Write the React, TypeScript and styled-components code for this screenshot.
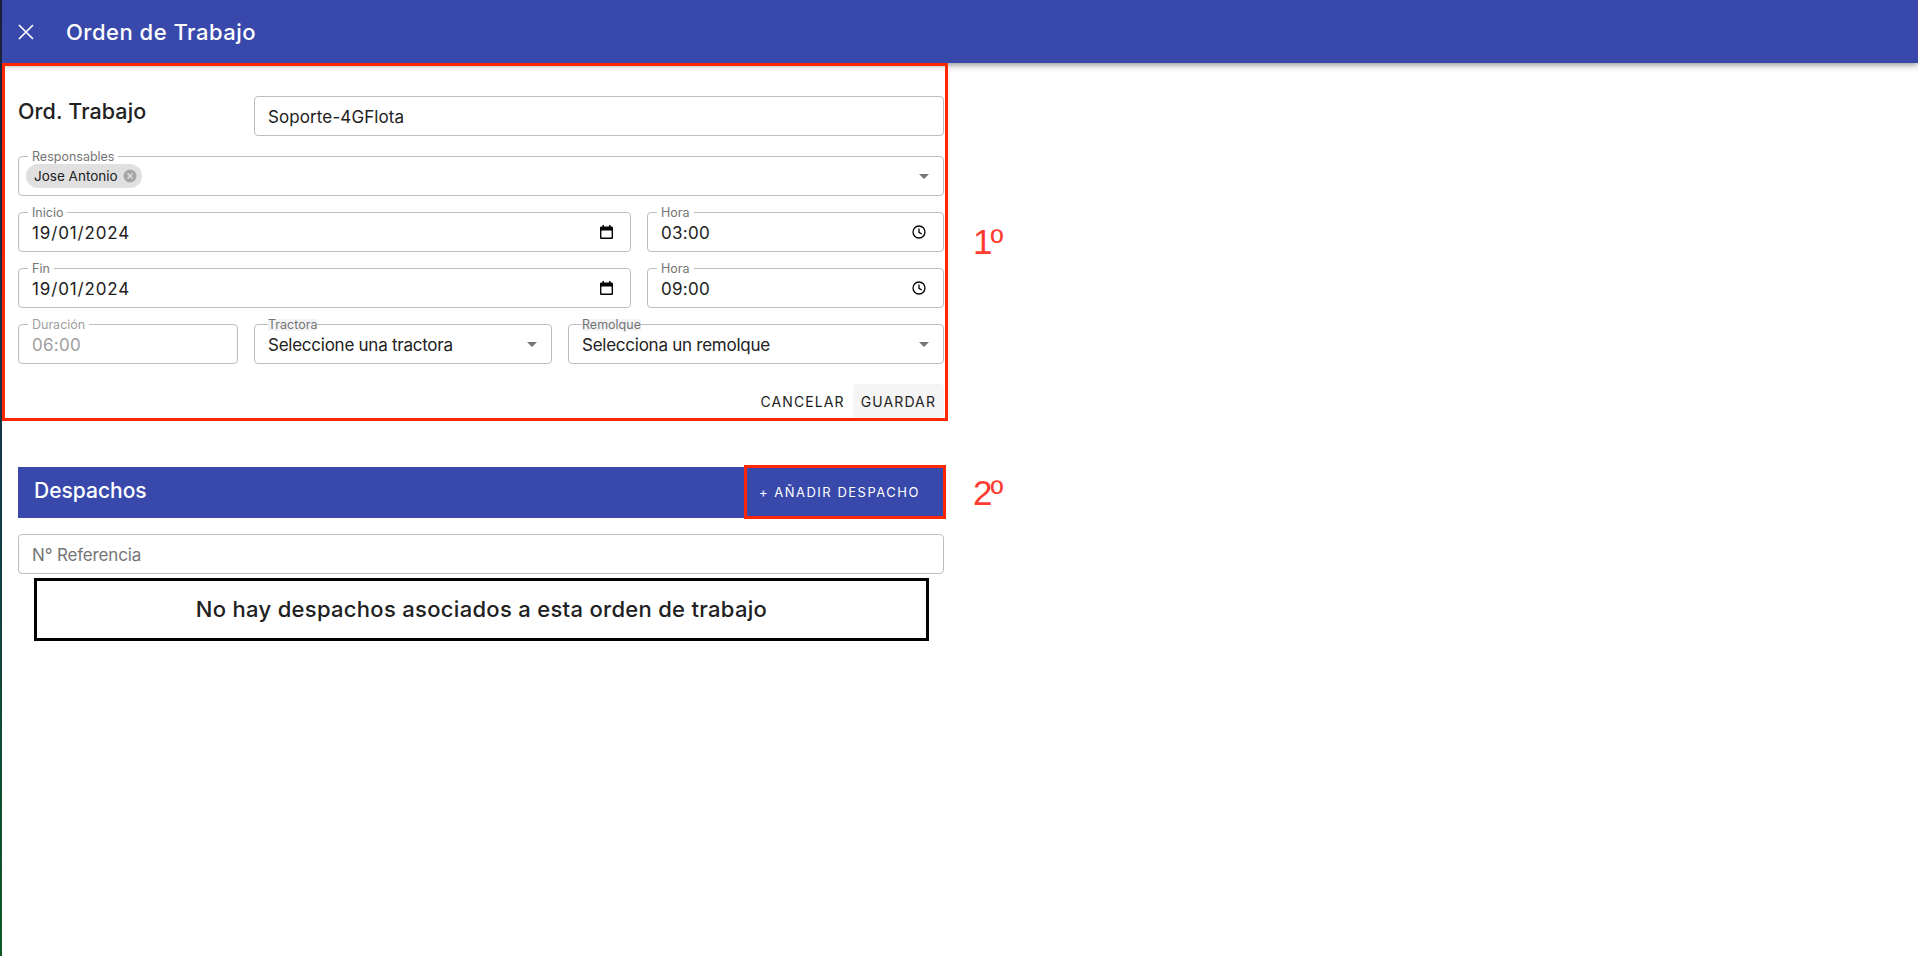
import React from "react";
import styled, { createGlobalStyle } from "styled-components";

const Global = createGlobalStyle`
  html, body { margin: 0; padding: 0; background: #fff; }
  body { font-family: "Inter", "Liberation Sans", sans-serif; color: #212121; }
`;

const Page = styled.div`
  position: relative;
  height: 956px;
  box-sizing: border-box;
  padding-left: 2px;
  background: #fff;
  overflow: hidden;
  &::before {
    content: "";
    position: absolute;
    left: 0;
    top: 0;
    bottom: 0;
    width: 2px;
    background: linear-gradient(#1c1f3a, #12384a 50%, #0d5a24);
  }
`;

const TopBar = styled.header`
  height: 63px;
  background: #3949ab;
  color: #fff;
  display: flex;
  align-items: center;
  gap: 31px;
  padding-left: 15px;
  box-shadow: 0 2px 4px -1px rgba(0,0,0,.2), 0 4px 5px rgba(0,0,0,.14), 0 1px 10px rgba(0,0,0,.12);
`;

const Title = styled.h1`
  margin: 0;
  font-size: 22px;
  font-weight: 450;
  letter-spacing: 0.5px;
`;

const Frame = styled.section`
  position: relative;
  width: 946px;
  height: 358px;
  box-sizing: border-box;
  border: 3px solid #ff2600;
  padding: 30px 1px 0 13px;
  display: flex;
  flex-direction: column;
  gap: 16px;
`;

const Row = styled.div<{ $cols: string; $after?: number }>`
  display: grid;
  grid-template-columns: ${(p) => p.$cols};
  column-gap: 16px;
  margin-bottom: ${(p) => p.$after ?? 0}px;
`;

const Heading = styled.div`
  font-size: 21.5px;
  font-weight: 450;
  letter-spacing: 0.1px;
  padding-top: 2px;
`;

const Field = styled.div<{ $muted?: boolean; $track?: number }>`
  position: relative;
  height: 40px;
  box-sizing: border-box;
  border: 1px solid #bdbdbd;
  border-radius: 4px;
  display: flex;
  align-items: center;
  justify-content: space-between;
  padding: 1px 13px 0;
  font-size: 17px;
  letter-spacing: ${(p) => p.$track ?? 0.1}px;
  color: ${(p) => (p.$muted ? "#9e9e9e" : "#212121")};
`;

const Floating = styled.label<{ $shade?: boolean; $muted?: boolean }>`
  position: absolute;
  top: -6px;
  left: ${(p) => (p.$shade ? "13px" : "9px")};
  padding: ${(p) => (p.$shade ? "0" : "0 4px")};
  background: ${(p) => (p.$shade ? "#f3f3f5" : "#fff")};
  font-size: 12.5px;
  line-height: 12px;
  letter-spacing: 0;
  color: ${(p) => (p.$muted ? "#9e9e9e" : "#757575")};
`;

const Chip = styled.span`
  display: inline-flex;
  align-items: center;
  gap: 4px;
  height: 24px;
  margin: -2px 0 0 -6px;
  padding: 0 4px 0 8px;
  border-radius: 12px;
  background: #e0e0e0;
  font-size: 13.5px;
  letter-spacing: 0;
`;

const Arrow = styled.span`
  width: 0;
  height: 0;
  margin: -1px 1px 0 0;
  border-left: 5px solid transparent;
  border-right: 5px solid transparent;
  border-top: 5px solid #757575;
`;

const Actions = styled.div`
  position: absolute;
  right: 1px;
  bottom: 0;
  display: flex;
  align-items: stretch;
`;

const TextButton = styled.button<{ $hover?: boolean }>`
  height: 34px;
  padding: 0 8px;
  border: 0;
  border-radius: 4px;
  background: ${(p) => (p.$hover ? "#f5f5f5" : "transparent")};
  font: 400 14px "Inter", "Liberation Sans", sans-serif;
  letter-spacing: 1.1px;
  color: #212121;
`;

const Annotation = styled.span<{ $top: number }>`
  position: absolute;
  left: 973px;
  top: ${(p) => p.$top}px;
  font: 35px "Liberation Sans", sans-serif;
  letter-spacing: -2px;
  color: #ff3b30;
`;

const Lower = styled.section`
  width: 926px;
  margin: 46px 0 0 16px;
  display: flex;
  flex-direction: column;
`;

const Banner = styled.div`
  height: 51px;
  background: #3949ab;
  color: #fff;
  display: flex;
  align-items: center;
  justify-content: space-between;
  padding-left: 16px;
`;

const BannerTitle = styled.div`
  font-size: 21px;
  font-weight: 450;
  margin-top: -4px;
`;

const AddButton = styled.div`
  align-self: stretch;
  margin: -2px -2px -1px 0;
  width: 202px;
  box-sizing: border-box;
  border: 3px solid #ff2600;
  display: flex;
  align-items: center;
  padding: 0 0 1px 12px;
  font-size: 13px;
  font-weight: 400;
  letter-spacing: 1.5px;
`;

const Reference = styled(Field)`
  margin-top: 16px;
  color: #757575;
`;

const Empty = styled.div`
  width: 895px;
  height: 63px;
  box-sizing: border-box;
  margin: 4px 0 0 16px;
  border: 3px solid #000;
  display: flex;
  align-items: center;
  justify-content: center;
  font-size: 22px;
  font-weight: 450;
  letter-spacing: 0.3px;
  padding-bottom: 1px;
`;

const Glyph = styled.svg<{ $inset?: number; $lift?: number }>`
  display: block;
  flex: none;
  margin-right: ${(p) => p.$inset ?? 0}px;
  margin-top: ${(p) => p.$lift ?? 0}px;
`;

const CloseIcon = () => (
  <Glyph width="18" height="18" viewBox="0 0 18 18" fill="none" stroke="#fff" strokeWidth="1.7">
    <path d="M2 2l14 14M16 2L2 16" />
  </Glyph>
);

const ChipClose = () => (
  <Glyph width="16" height="16" viewBox="0 0 16 16">
    <circle cx="8" cy="8" r="6.5" fill="#a6a6a6" />
    <path d="M5.5 5.5l5 5M10.5 5.5l-5 5" stroke="#e0e0e0" strokeWidth="1.4" />
  </Glyph>
);

const CalendarIcon = () => (
  <Glyph $inset={4} $lift={-2} width="13" height="14" viewBox="0 0 13 14">
    <path d="M2.5 0h1.4v1.5h5.2V0h1.4v1.5h1.2A1.3 1.3 0 0 1 13 2.8v9.9a1.3 1.3 0 0 1-1.3 1.3H1.3A1.3 1.3 0 0 1 0 12.7V2.8a1.3 1.3 0 0 1 1.3-1.3h1.2V0zM1.4 5.5v7.1h10.2V5.5H1.4z" fill="#000" />
  </Glyph>
);

const ClockIcon = () => (
  <Glyph $inset={4} $lift={-2} width="14" height="14" viewBox="0 0 14 14" fill="none" stroke="#000" strokeWidth="1.3">
    <circle cx="7" cy="7" r="6" />
    <path d="M7 3.4V7.3l2.8 1.7" />
  </Glyph>
);

export default function App() {
  return (
    <Page>
      <Global />
      <TopBar>
        <CloseIcon />
        <Title>Orden de Trabajo</Title>
      </TopBar>
      <Frame>
        <Row $cols="220px 1fr" $after={4}>
          <Heading>Ord. Trabajo</Heading>
          <Field>Soporte-4GFlota</Field>
        </Row>
        <Field>
          <Floating>Responsables</Floating>
          <Chip>Jose Antonio <ChipClose /></Chip>
          <Arrow />
        </Field>
        <Row $cols="613px 297px">
          <Field $track={0.85}><Floating>Inicio</Floating>19/01/2024<CalendarIcon /></Field>
          <Field $track={0.3}><Floating>Hora</Floating>03:00<ClockIcon /></Field>
        </Row>
        <Row $cols="613px 297px">
          <Field $track={0.85}><Floating>Fin</Floating>19/01/2024<CalendarIcon /></Field>
          <Field $track={0.3}><Floating>Hora</Floating>09:00<ClockIcon /></Field>
        </Row>
        <Row $cols="220px 298px 376px">
          <Field $muted $track={0.3}><Floating $muted>Duración</Floating>06:00</Field>
          <Field $track={-0.25}><Floating $shade>Tractora</Floating>Seleccione una tractora<Arrow /></Field>
          <Field $track={-0.25}><Floating $shade>Remolque</Floating>Selecciona un remolque<Arrow /></Field>
        </Row>
        <Actions>
          <TextButton>CANCELAR</TextButton>
          <TextButton $hover>GUARDAR</TextButton>
        </Actions>
      </Frame>
      <Annotation $top={222}>1º</Annotation>
      <Annotation $top={473}>2º</Annotation>
      <Lower>
        <Banner>
          <BannerTitle>Despachos</BannerTitle>
          <AddButton>+ AÑADIR DESPACHO</AddButton>
        </Banner>
        <Reference $track={-0.15}>N° Referencia</Reference>
        <Empty>No hay despachos asociados a esta orden de trabajo</Empty>
      </Lower>
    </Page>
  );
}
